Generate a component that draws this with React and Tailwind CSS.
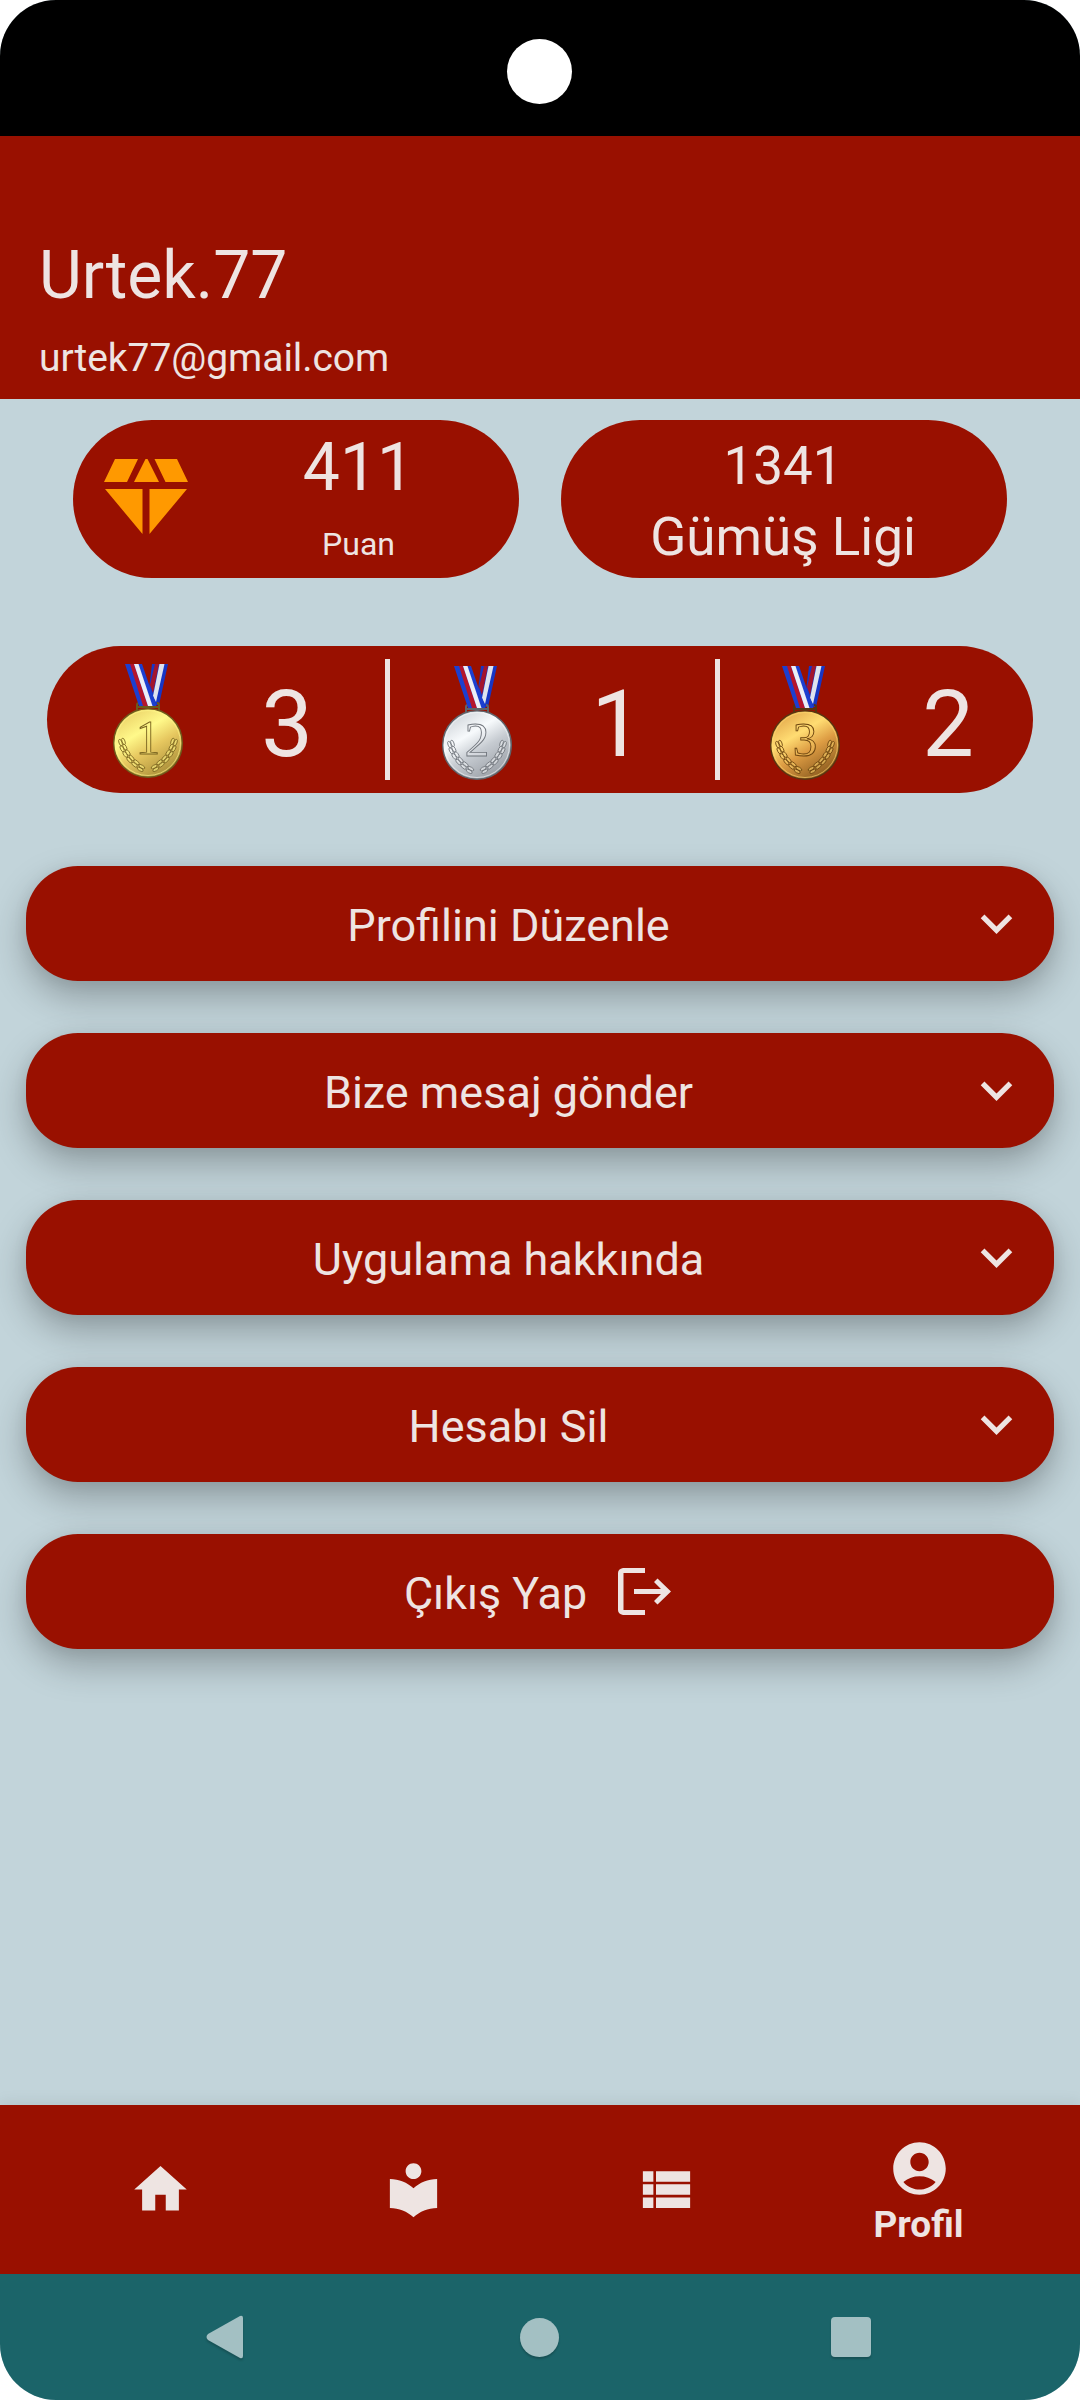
import { MdExpandMore, MdHome, MdLocalLibrary, MdAccountCircle } from "react-icons/md";

const MEDALS = [
  { place: "1", count: 3, light: "#fff98a", mid: "#e6c75f", dark: "#a88c38", edge: "#6d5a1c", ink: "#7a6420", cell: "pl-[65px] pt-[2px]", number: "pl-[5px]" },
  { place: "2", count: 1, light: "#f7fafc", mid: "#c6cbd1", dark: "#999ea5", edge: "#5f646b", ink: "#70757c", cell: "pl-[51px] pt-[6px]", number: "pl-[6px]" },
  { place: "3", count: 2, light: "#ffdc72", mid: "#dd9c43", dark: "#8a5a1e", edge: "#573510", ink: "#6b430f", cell: "pl-[49px] pt-[7px]", number: "pl-[22px]" },
];

const LEAVES = [
  [-26, -1, 70], [-24.5, 5, 62], [-21.5, 10.5, 54], [-17.5, 16, 48], [-12.5, 20.5, 40], [-7, 25, 30],
];

function Laurel({ flip, ink, light }) {
  return (
    <g transform={flip ? "scale(-1 1)" : undefined} stroke={ink} strokeWidth="0.8" fill={light} fillOpacity="0.5">
      {LEAVES.map(([x, y, r]) => (
        <g key={y} transform={`translate(${x} ${y}) rotate(${r})`}>
          <ellipse cx="0" cy="-1.600" rx="3.400" ry="1.500" />
          <ellipse cx="0" cy="1.600" rx="3.400" ry="1.500" />
        </g>
      ))}
    </g>
  );
}

function Medal({ m }) {
  const id = `medal${m.place}`;
  return (
    <svg className="block h-[116px] w-[72px]" viewBox="-36 -80 72 116">
      <defs>
        <linearGradient id={id} x1="0.1" y1="0" x2="0.7" y2="1">
          <stop offset="0" stopColor={m.mid} />
          <stop offset="0.38" stopColor={m.light} />
          <stop offset="0.62" stopColor={m.mid} />
          <stop offset="1" stopColor={m.dark} />
        </linearGradient>
      </defs>
      <path d="M4 -79H20L11 -38H-1Z" fill="#1736c4" />
      <path d="M7 -79H11L5 -50L2 -58Z" fill="#a3142d" />
      <path d="M11.5 -79H16.5L8 -41L5 -47Z" fill="#dfe3ee" />
      <path d="M-11 -33V-38Q-11 -40 -9 -40M11 -33V-38Q11 -40 9 -40M-11 -36H11" fill="none" stroke={m.edge} strokeWidth="2" />
      <path d="M-23 -79H-6L8.5 -37H-9Z" fill="#1c3fd0" />
      <path d="M-18 -79H-14L0 -37H-5Z" fill="#b5152c" />
      <path d="M-14 -79H-9.5L4.500 -37H0Z" fill="#eceef6" />
      <circle r="34.300" fill={`url(#${id})`} stroke={m.edge} strokeWidth="1.4" />
      <circle r="32.500" fill="none" stroke={m.light} strokeOpacity="0.6" strokeWidth="1" />
      <Laurel ink={m.ink} light={m.light} />
      <Laurel flip ink={m.ink} light={m.light} />
      <text x="0" y="10.500" textAnchor="middle" fontFamily="'Liberation Serif', serif" fontSize="49" fill={m.light} fillOpacity="0.3" stroke={m.ink} strokeWidth="0.9">
        {m.place}
      </text>
    </svg>
  );
}

function MenuCard({ label }) {
  return (
    <button className="flex h-[115px] w-full items-center rounded-[52px] bg-[#991000] pr-[26px] pl-[26px] shadow-[0_16px_36px_rgba(0,0,0,0.27),0_2px_16px_rgba(0,0,0,0.06)]">
      <span className="flex-1 pt-[5px] text-center text-[45px] leading-[52px]">{label}</span>
      <MdExpandMore className="size-[63px]" />
    </button>
  );
}

export default function App() {
  return (
    <div className="h-[2400px] w-[1080px] bg-white">
      <div className="flex h-full w-full flex-col overflow-hidden rounded-[56px] bg-[#c2d4da] font-['Roboto',sans-serif] text-[#eee4e2]">
        <div className="flex h-[136px] shrink-0 justify-center bg-black pt-[39px] pr-[1px]">
          <div className="size-[65px] rounded-full bg-white" />
        </div>

        <header className="h-[263px] shrink-0 bg-[#991000] pt-[101px] pl-[39px]">
          <h1 className="text-[66px] leading-[78px]">Urtek.77</h1>
          <p className="mt-[20px] text-[39px] leading-[46px] tracking-[-0.060px]">urtek77@gmail.com</p>
        </header>

        <main className="flex flex-1 flex-col">
          <section className="mt-[21px] grid h-[158px] grid-cols-2 gap-[42px] px-[73px]">
            <div className="flex rounded-full bg-[#991000]">
              <svg className="mt-[39px] ml-[30px] h-[76px] w-[86px] shrink-0" viewBox="0 0 86 76" fill="#ff9900">
                <path d="M12 0H35L24 23H1ZM42.500 0H44.500L56 23H31ZM51.500 0H74L85 23H62.500ZM2 30H39.500V75ZM46.500 30H84L46.500 75Z" />
              </svg>
              <div className="ml-[12px] flex flex-1 flex-col items-center pr-[3px]">
                <span className="mt-[9px] text-[66px] leading-[77px]">411</span>
                <span className="mt-[20px] text-[32px] leading-[37px]">Puan</span>
              </div>
            </div>
            <div className="flex flex-col items-center rounded-full bg-[#991000] pt-[15px] pr-[2px]">
              <span className="text-[53px] leading-[62px]">1341</span>
              <span className="mt-[9px] text-[53px] leading-[62px]">Gümüş Ligi</span>
            </div>
          </section>

          <section className="mx-[47px] mt-[68px] grid h-[147px] grid-cols-[343px_330px_313px] rounded-full bg-[#991000]">
            {MEDALS.map((m, i) => (
              <div key={m.place} className="flex items-center">
                <div className={m.cell}>
                  <Medal m={m} />
                </div>
                <span className={`flex-1 pt-[10px] text-center text-[92px] leading-[108px] ${m.number}`}>{m.count}</span>
                {i < 2 && <i className="h-[121px] w-[5px] bg-[#eee4e2]" />}
              </div>
            ))}
          </section>

          <section className="mt-[73px] flex flex-col gap-[52px] px-[26px]">
            <MenuCard label="Profilini Düzenle" />
            <MenuCard label="Bize mesaj gönder" />
            <MenuCard label="Uygulama hakkında" />
            <MenuCard label="Hesabı Sil" />
            <button className="flex h-[115px] w-full items-center justify-center rounded-[52px] bg-[#991000] pr-[5px] shadow-[0_16px_36px_rgba(0,0,0,0.27),0_2px_16px_rgba(0,0,0,0.06)]">
              <span className="pt-[5px] text-[44.800px] leading-[52px]">Çıkış Yap</span>
              <svg className="ml-[31px] h-[47px] w-[53px]" viewBox="0 0 53 47" fill="currentColor">
                <path d="M27 0V5H5.500V42H27V47H5Q0 46 0 42V5Q0 1 5 0Z" />
                <path d="M16 21H43L36 14L39.500 10.500L53 23.500L39.500 36.500L36 33L43 26H16Z" />
              </svg>
            </button>
          </section>
        </main>

        <nav className="flex h-[169px] shrink-0 items-center bg-[#991000] px-[34px] shadow-[0_0_16px_rgba(0,0,0,0.1)]">
          <div className="flex flex-1 justify-center"><MdHome className="size-[63px]" /></div>
          <div className="flex flex-1 justify-center"><MdLocalLibrary className="size-[63px]" /></div>
          <div className="flex flex-1 justify-center">
            <svg className="size-[63px]" viewBox="0 0 24 24" fill="currentColor">
              <path d="M3 14h4v-4H3v4zm0 5h4v-4H3v4zM3 9h4V5H3v4zm5 5h13v-4H8v4zm0 5h13v-4H8v4zM8 5v4h13V5H8z" />
            </svg>
          </div>
          <div className="flex flex-1 flex-col items-center pt-[3px]">
            <MdAccountCircle className="size-[63px]" />
            <span className="mt-[3px] pr-[2px] text-[37px] leading-[43px] font-bold">Profil</span>
          </div>
        </nav>

        <div className="flex h-[126px] shrink-0 items-center justify-between bg-[#1b6469] pr-[209px] pl-[206px]">
          <svg className="h-[44px] w-[39px] drop-shadow-[0_2px_1px_rgba(0,0,0,0.2)]" viewBox="0 0 39 44" fill="#a3c0c3">
            <path d="M34 1Q37 0 37 3V41Q37 44 34 43L2 25Q-1 22 2 19Z" />
          </svg>
          <div className="ml-[3px] size-[39px] rounded-full bg-[#a3c0c3] shadow-[0_2px_2px_rgba(0,0,0,0.2)]" />
          <div className="size-[40px] rounded-[4px] bg-[#a3c0c3] shadow-[0_2px_2px_rgba(0,0,0,0.2)]" />
        </div>
      </div>
    </div>
  );
}
